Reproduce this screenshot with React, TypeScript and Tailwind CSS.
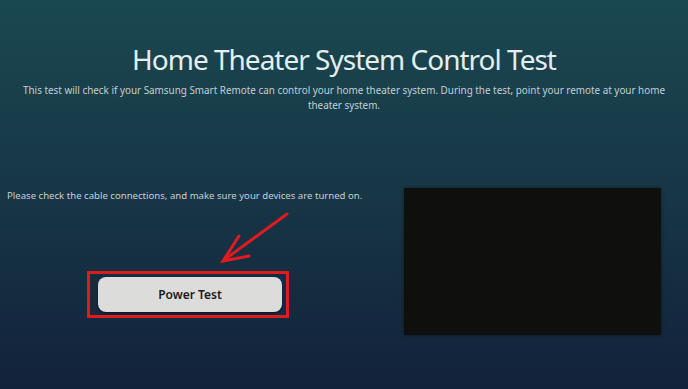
export default function App() {
  return (
    <div
      className="relative w-[688px] h-[389px] overflow-hidden bg-gradient-to-b from-[#1a4850] via-[#173646] to-[#12223a] text-[#dfe9ea]"
      style={{ fontFamily: '"Noto Sans", "Open Sans", sans-serif' }}
    >
      <div className="flex flex-col items-center pt-[41px]">
        <h1 className="text-[28px] leading-[36px] tracking-[-1px] text-[#e3eeee]">
          Home Theater System Control Test
        </h1>
        <p className="mt-[6px] w-[652px] text-center text-[9.9px] leading-[15px] text-[#c3d0d4]">
          This test will check if your Samsung Smart Remote can control your home theater system. During the test, point your remote at your home theater system.
        </p>
      </div>

      <div className="flex mt-[75px]">
        <div className="w-[404px] pl-[7px] pt-[1px]">
          <p className="text-[9.6px] leading-[14px] text-[#c3d0d4]">
            Please check the cable connections, and make sure your devices are turned on.
          </p>
          <div className="ml-[80px] mt-[68px] w-[202px] h-[47px] border-[3px] border-[#e01b1f] pl-[8px] pr-[4px] pt-[3px]">
            <button className="w-[184px] h-[35px] rounded-[8px] bg-[#dcdcda] shadow-[0_1px_2px_rgba(0,0,0,0.5)] text-[12px] font-semibold text-[#1b1b1b]">
              Power Test
            </button>
          </div>
        </div>
        <div className="w-[257px] h-[147px] bg-[#0f0f0d] shadow-[0_0_4px_rgba(0,0,0,0.4)]" />
      </div>

      <svg className="absolute left-[215px] top-[208px]" width="80" height="62" viewBox="0 0 80 62">
        <g stroke="#e01b1f" strokeWidth="3" strokeLinecap="round" fill="none">
          <line x1="72" y1="6" x2="9" y2="52" />
          <polyline points="24,28 8,53 34,48" />
        </g>
      </svg>
    </div>
  );
}
